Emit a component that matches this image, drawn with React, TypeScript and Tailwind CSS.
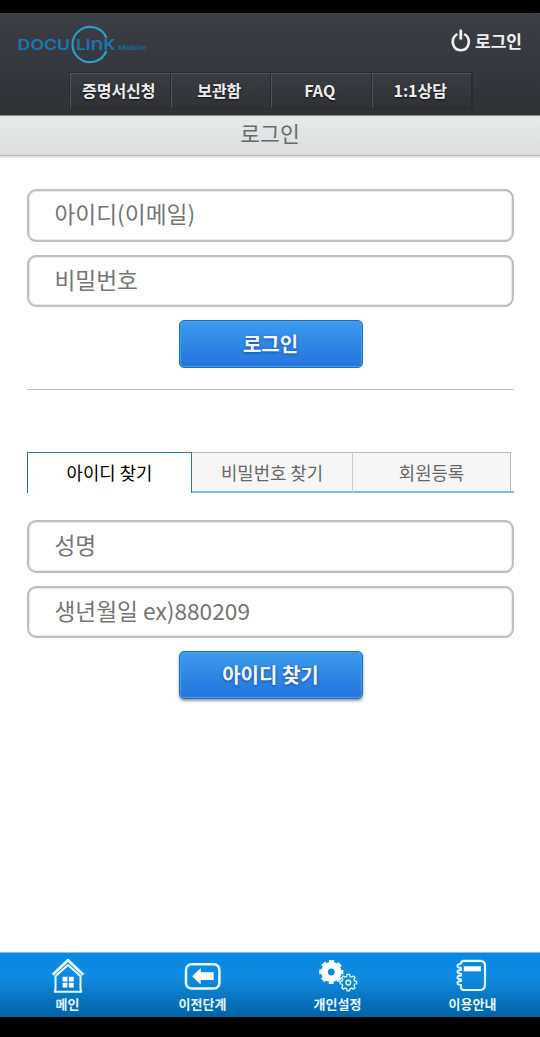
import type { ReactNode } from 'react'

const MENU = ['증명서신청', '보관함', 'FAQ', '1:1상담']

const TABS = [
  { label: '아이디 찾기',   style: 'w-[165px] border border-b-0 border-[#3078ae] pb-0.5 text-black bg-white' },
  { label: '비밀번호 찾기', style: 'w-[161px] border-t border-r border-t-[#bbb] border-r-[#ccc] border-b-2 border-b-[#7cbce6] bg-[#f6f6f6] text-[#666]' },
  { label: '회원등록',      style: 'w-[158px] border-t border-r border-t-[#bbb] border-r-[#bbb] border-b-2 border-b-[#7cbce6] bg-[#f6f6f6] text-[#666]' },
]

function Logo() {
  return (
    <svg width="135" height="42" viewBox="15 23 135 42" className="block" fontFamily="'Liberation Sans', sans-serif">
      <path d="M106.4 38 A17.6 17.6 0 1 0 106.4 51" fill="none" stroke="#2f9fc9" strokeWidth="2.1" />
      <g fill="#1878b4" fontFamily="Inter, sans-serif" fontSize="14" fontWeight="600">
        <text x="17.6" y="50" textLength="52.5" lengthAdjust="spacingAndGlyphs">DOCU</text>
        <text x="76.3" y="50" textLength="39" lengthAdjust="spacingAndGlyphs">
          LI<tspan fontSize="18" fontWeight="500">n</tspan>K
        </text>
      </g>
      <text x="118" y="50" fill="#1b6898" fontSize="7.7" fontWeight="700" textLength="28.5" lengthAdjust="spacingAndGlyphs">Mobile</text>
    </svg>
  )
}

function PowerIcon() {
  return (
    <svg width="20" height="24" viewBox="0 0 20 24" fill="none" stroke="#f0f0f0">
      <path d="M6.4 5 C-1.2 9.5 1.2 21.3 9.8 21.3 S20.8 9.5 13.2 5" strokeWidth="2.6" />
      <path d="M9.8 0.6 V10.5" strokeWidth="2.8" />
    </svg>
  )
}

function HomeIcon() {
  return (
    <svg width="40" height="36" viewBox="0 0 40 36" fill="none" stroke="#e8faff" strokeLinejoin="round">
      <path d="M4.7 16.8 L20 2.2 L35.3 16.8" strokeWidth="2.9" />
      <path d="M7.5 18.2 L20 7 L32.5 18.2 V31 L33.3 33.8 H6.7 L7.5 31 Z" strokeWidth="2" />
      <path d="M14.6 18.8h4.8v4.6h-4.8zM20.9 18.8h4.8v4.6h-4.8zM14.6 24.8h4.8v4.6h-4.8zM20.9 24.8h4.8v4.6h-4.8z" fill="#fff" stroke="none" />
    </svg>
  )
}

function BackIcon() {
  return (
    <svg width="40" height="36" viewBox="0 0 40 36" fill="none">
      <rect x="3" y="6.2" width="33.4" height="24.2" rx="5.5" stroke="#e8faff" strokeWidth="2.5" />
      <path d="M9.2 18.2 L17.7 10 V14.3 H30.7 V22.1 H17.7 V26.4 Z" fill="#fff" />
    </svg>
  )
}

function GearsIcon() {
  return (
    <svg width="40" height="36" viewBox="0 0 40 36" fill="none">
      <circle cx="13.3" cy="14" r="6.8" stroke="#fff" strokeWidth="6.8" />
      <circle cx="13.3" cy="14" r="10.6" stroke="#fff" strokeWidth="3" strokeDasharray="4.7 3.625" strokeDashoffset="2.35" />
      <path
        d="M28.7 18.4 L29.2 16.4 H31.5 L32 18.4 L33.7 19.1 L35.5 18 L37 19.6 L35.9 21.4 L36.6 23 L38.6 23.5 V25.7 L36.6 26.2 L35.9 27.9 L37 29.7 L35.5 31.2 L33.7 30.1 L32 30.8 L31.5 32.8 H29.2 L28.7 30.8 L27 30.1 L25.2 31.2 L23.7 29.7 L24.8 27.9 L24.1 26.2 L22.1 25.7 V23.5 L24.1 23 L24.8 21.4 L23.7 19.6 L25.2 18 L27 19.1 Z"
        stroke="#dff6ff" strokeWidth="1.3"
      />
      <circle cx="30.3" cy="24.6" r="2.4" stroke="#dff6ff" strokeWidth="1.4" />
    </svg>
  )
}

function NotebookIcon() {
  return (
    <svg width="40" height="36" viewBox="0 0 40 36" fill="none">
      <path
        d="M10.5 2.9 H27 Q32 2.9 32 7.8 V26.8 Q32 32 27 32 H10.5 Q8.2 31.6 7.8 29 M10.5 2.9 Q8.2 3.1 7.8 6"
        stroke="#e8faff" strokeWidth="2.1"
      />
      <path
        d="M7.8 6 Q4.4 6 4.4 7.9 T8 9.8 V12 Q4.4 12 4.4 13.8 T8 15.7 V17.5 Q4.4 17.5 4.4 19.4 T8 21.3 V23.2 Q4.4 23.2 4.4 25.1 T8 27 V29.4"
        stroke="#e8faff" strokeWidth="1.8"
      />
      <rect x="10.8" y="8.3" width="17.2" height="5" fill="#fff" />
    </svg>
  )
}

const FOOTER: { label: string; icon: ReactNode }[] = [
  { label: '메인',     icon: <HomeIcon /> },
  { label: '이전단계', icon: <BackIcon /> },
  { label: '개인설정', icon: <GearsIcon /> },
  { label: '이용안내', icon: <NotebookIcon /> },
]

function Field({ placeholder, type = 'text' }: { placeholder: string; type?: string }) {
  return (
    <input
      type={type}
      placeholder={placeholder}
      className="block h-[52.5px] w-full rounded-[9px] border-[2.5px] border-[#bfbfbf] bg-white pl-[25.5px] pb-[3px] text-[22.7px] text-[#757575] placeholder:text-[#757575] outline-none shadow-[inset_0_0_0_0.5px_#d5d5d5]"
    />
  )
}

function SubmitButton({ children, raised }: { children: ReactNode; raised?: boolean }) {
  return (
    <button
      type="button"
      className={`mx-auto block h-[48px] w-[184px] rounded-[5px] border border-[#1b70b5] bg-linear-to-b from-[#3d9bec] to-[#2374df] pb-px text-[20px] font-bold text-[#f4f8ff] [text-shadow:0_1px_3px_#154b9c] ${
        raised
          ? 'shadow-[inset_0_0_0_1px_#459fe8,0_2px_3px_#999]'
          : 'shadow-[inset_0_0_0_1px_#459fe8]'
      }`}
    >
      {children}
    </button>
  )
}

export default function App() {
  return (
    <div className="flex h-[1037px] w-[540px] flex-col overflow-hidden bg-black pt-[13px] pb-[20px] font-['Noto_Sans_CJK_KR',sans-serif]">
      {/* Header */}
      <header className="h-[102px] shrink-0 bg-linear-to-b from-[#3b3f46] to-[#303236]">
        <div className="flex h-[59px] items-start justify-between pt-[10px] pr-[18px] pl-[15px]">
          <Logo />
          <a className="flex items-center gap-[4px] pt-[6px] text-[17px] leading-6 font-bold text-[#f0f0f0]">
            <PowerIcon />
            로그인
          </a>
        </div>
        <nav className="ml-[69px] flex h-[37px] w-[404px] border border-[#292b2f]">
          {MENU.map((item) => (
            <a
              key={item}
              className="flex flex-1 items-center justify-center border-t border-r border-l border-t-[#50535a] border-r-[#292b2f] border-l-[#50535a] bg-linear-to-b from-[#3a3d43] to-[#303237] pr-[3px] pb-[3px] text-[16px] font-bold text-[#eee] [text-shadow:0_1px_2px_#111]"
            >
              {item}
            </a>
          ))}
        </nav>
      </header>

      <h1 className="flex h-[41px] shrink-0 items-center justify-center border-t border-b border-t-[#8b8d8f] border-b-[#bbb] bg-linear-to-b from-[#e8eaea] to-[#dadedd] pb-[4px] text-[21.5px] text-[#656b69]">
        로그인
      </h1>

      <main className="flex-1 bg-white px-[27px] pt-[33px] pr-[26px] shadow-[inset_0_3px_3px_-2px_#ccc]">
        {/* Login form */}
        <form className="space-y-[13px]">
          <Field placeholder="아이디(이메일)" />
          <Field placeholder="비밀번호" type="password" />
          <SubmitButton>로그인</SubmitButton>
        </form>

        <hr className="mt-[21px] border-t-[1.5px] border-[#c0c0c0]" />

        {/* Account lookup */}
        <div className="mt-[62px] flex h-[41px]">
          {TABS.map((tab) => (
            <button key={tab.label} type="button" className={`text-[17.8px] ${tab.style}`}>
              {tab.label}
            </button>
          ))}
          <div className="flex-1 border-b-2 border-[#7cbce6]" />
        </div>
        <form className="mt-[27px] space-y-[13px]">
          <Field placeholder="성명" />
          <Field placeholder="생년월일 ex)880209" />
          <SubmitButton raised>아이디 찾기</SubmitButton>
        </form>
      </main>

      <footer className="flex h-[65px] shrink-0 border-t border-[#7dc3ef] bg-linear-to-b from-[#0889e3] via-[#0f8be0] via-40% to-[#0262a3]">
        {FOOTER.map(({ label, icon }) => (
          <a key={label} className="flex flex-1 flex-col items-center pt-[5px] text-[13px] leading-[20px] font-bold text-[#e6f7ff]">
            {icon}
            {label}
          </a>
        ))}
      </footer>
    </div>
  )
}
